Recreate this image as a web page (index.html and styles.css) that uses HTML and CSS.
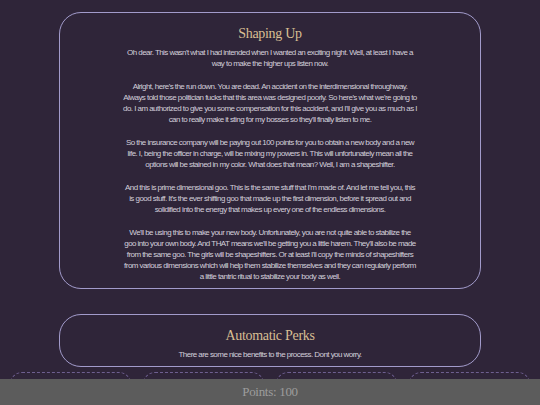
FILE: index.html
```html
<!DOCTYPE html>
<html lang="en">
<head>
  <meta charset="UTF-8">
  <meta name="viewport" content="width=device-width, initial-scale=1.0">
  <title>Shaping Up</title>
  <link rel="stylesheet" href="styles.css">
</head>
<body>
  <div class="page">
    <section class="section">
      <h2>Shaping Up</h2>
      <p>Oh dear. This wasn't what I had intended when I wanted an exciting night. Well, at least I have a way to make the higher ups listen now.</p>
      <p>Alright, here's the run down. You are dead. An accident on the interdimensional throughway. Always told those politician fucks that this area was designed poorly. So here's what we're going to do. I am authorized to give you some compensation for this accident, and I'll give you as much as I can to really make it sting for my bosses so they'll finally listen to me.</p>
      <p>So the insurance company will be paying out 100 points for you to obtain a new body and a new life. I, being the officer in charge, will be mixing my powers in. This will unfortunately mean all the options will be stained in my color. What does that mean? Well, I am a shapeshifter.</p>
      <p>And this is prime dimensional goo. This is the same stuff that I'm made of. And let me tell you, this is good stuff. It's the ever shifting goo that made up the first dimension, before it spread out and solidified into the energy that makes up every one of the endless dimensions.</p>
      <p>We'll be using this to make your new body. Unfortunately, you are not quite able to stabilize the goo into your own body. And THAT means we'll be getting you a little harem. They'll also be made from the same goo. The girls will be shapeshifters. Or at least I'll copy the minds of shapeshifters from various dimensions which will help them stabilize themselves and they can regularly perform a little tantric ritual to stabilize your body as well.</p>
    </section>

    <section class="section">
      <h2>Automatic Perks</h2>
      <p class="intro">There are some nice benefits to the process. Dont you worry.</p>
    </section>

    <div class="perks">
      <div class="perk"><h3>Eternal Youth</h3></div>
      <div class="perk"><h3>Magical Affinity</h3></div>
      <div class="perk"><h3>Wealth</h3></div>
      <div class="perk"><h3>Beauty</h3></div>
    </div>
  </div>

  <div class="points">Points: 100</div>
</body>
</html>
```

FILE: styles.css
```css
body {
  margin: 0;
  background-color: #2f2539;
  color: #d3cfd9;
  font-family: "Liberation Sans", Arial, sans-serif;
}
.page {
  padding: 12px 10px 40px;
}
.section {
  width: 422px;
  margin: 0 auto 25px;
  padding: 10px 20px 6px;
  box-sizing: border-box;
  border: 1px solid #a29bcb;
  border-radius: 22px;
  text-align: center;
}
.section h2 {
  font-family: "Liberation Serif", "Times New Roman", serif;
  font-weight: normal;
  font-size: 14px;
  line-height: 22px;
  letter-spacing: -0.3px;
  color: #d8bf93;
  margin: 0 0 2px;
}
.section p {
  max-width: 294.25px;
  font-size: 8px;
  line-height: 11px;
  letter-spacing: -0.55px;
  margin: 0 auto 12px;
}
.section p:last-child {
  margin-bottom: 0;
}
.section p.intro {
  margin-top: 2px;
}
.perks {
  display: flex;
  gap: 12px;
  margin-top: -20px;
}
.perk {
  flex: 1;
  height: 80px;
  border: 1px dashed #6e5f90;
  border-radius: 12px;
  text-align: center;
}
.perk h3 {
  font-family: "Liberation Serif", "Times New Roman", serif;
  font-weight: normal;
  font-size: 14px;
  line-height: 16px;
  letter-spacing: -0.3px;
  color: #d8bf93;
  margin: 5px 0 0;
}
.points {
  position: fixed;
  left: 0;
  right: 0;
  bottom: 0;
  height: 26px;
  line-height: 26px;
  background-color: #5c5c5c;
  color: #9c9c9c;
  text-align: center;
  font-family: "Liberation Serif", "Times New Roman", serif;
  font-size: 13px;
  letter-spacing: -0.3px;
}
```
